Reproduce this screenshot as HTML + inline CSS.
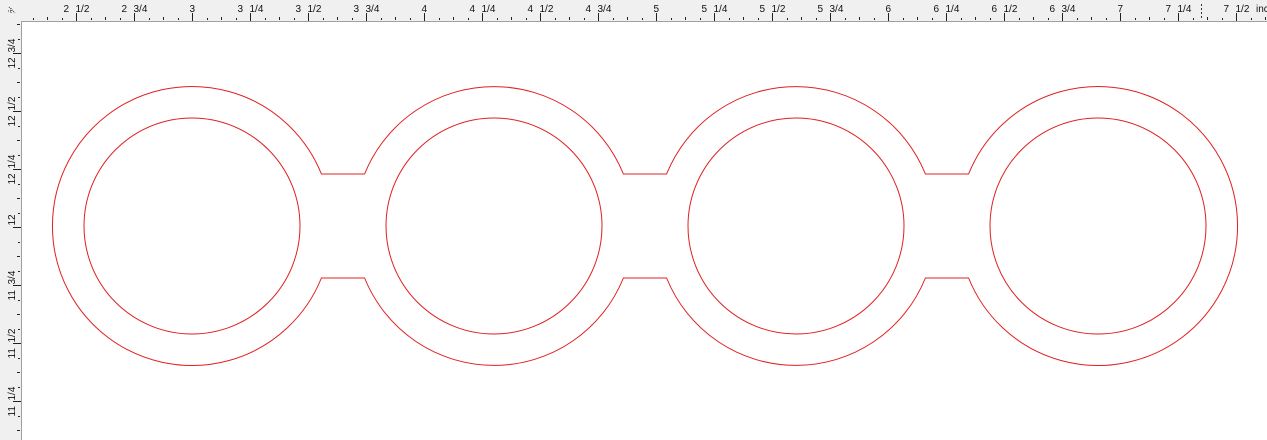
<!DOCTYPE html>
<html><head><meta charset="utf-8"><style>
html,body{margin:0;padding:0;width:1267px;height:440px;overflow:hidden;background:#fff}
svg{display:block;font-family:"Liberation Sans",sans-serif;font-size:10px}
</style></head><body>
<svg id="s" width="1267" height="440" xmlns="http://www.w3.org/2000/svg">
<rect x="0" y="0" width="1267" height="21" fill="#f0f0f0"/>
<rect x="0" y="0" width="21" height="440" fill="#f0f0f0"/>
<line x1="21" y1="21.5" x2="1267" y2="21.5" stroke="#a0a0a0"/>
<line x1="21.5" y1="21" x2="21.5" y2="440" stroke="#a0a0a0"/>
<g id="t"></g>
<g stroke="#333" stroke-dasharray="1,1"><line x1="9" y1="7" x2="15" y2="13"/><line x1="8" y1="11" x2="12" y2="11"/><line x1="11" y1="8" x2="11" y2="14"/></g>
<line x1="1201.5" y1="4" x2="1201.5" y2="20" stroke="#333" stroke-dasharray="2,2"/>
<path fill="none" stroke="#e02020" stroke-width="1" d="M321.4 174 L364.6 174 A139.5 139.5 0 0 1 623.4 174 L666.6 174 A139.5 139.5 0 0 1 925.4 174 L968.6 174 A139.5 139.5 0 1 1 968.6 278 L925.4 278 A139.5 139.5 0 0 1 666.6 278 L623.4 278 A139.5 139.5 0 0 1 364.6 278 L321.4 278 A139.5 139.5 0 1 1 321.4 174 Z"/>
<circle cx="192" cy="226" r="108" fill="none" stroke="#e02020"/>
<circle cx="494" cy="226" r="108" fill="none" stroke="#e02020"/>
<circle cx="796" cy="226" r="108" fill="none" stroke="#e02020"/>
<circle cx="1098" cy="226" r="108" fill="none" stroke="#e02020"/>
</svg>
<script>
var g=document.getElementById('t'),h='';
var fr=['','1/4','1/2','3/4'];
for(var i=-20;i<=90;i++){var v=3+i/16;var x=192+(v-3)*232;if(x<22||x>1267)continue;x=Math.round(x)+0.5;
 if(i%4==0){h+='<line x1="'+x+'" y1="13" x2="'+x+'" y2="21" stroke="#222"/>';
  var w=Math.floor(v+1e-9),q=Math.round((v-w)*4);
  if(q==0)h+='<text x="'+(x-3)+'" y="12" fill="#111">'+w+'</text>';
  else h+='<text x="'+(x-13)+'" y="12" fill="#111">'+w+'</text><text x="'+(x-1)+'" y="12" fill="#111">'+fr[q]+'</text>';}
 else h+='<rect x="'+(x-0.5)+'" y="'+(i%2?18:17)+'" width="1" height="'+(i%2?2:3)+'" fill="#222"/>';}
h+='<text x="1256" y="12" fill="#111">inc</text>';
for(var i=-30;i<=30;i++){var v=12-i/16;var y=227+i*14.5;if(y<22||y>440)continue;y=Math.round(y)+0.5;
 if(i%4==0){h+='<line x1="13" y1="'+y+'" x2="21" y2="'+y+'" stroke="#222"/>';
  var w=Math.floor(v+1e-9),q=Math.round((v-w)*4);
  if(q==0)h+='<text transform="translate(15,'+(y-2)+') rotate(-90)" fill="#111">'+w+'</text>';
  else h+='<text transform="translate(15,'+(y+15)+') rotate(-90)" fill="#111">'+w+'</text><text transform="translate(15,'+(y-1)+') rotate(-90)" fill="#111">'+fr[q]+'</text>';}
 else h+='<rect x="'+(i%2?18:17)+'" y="'+(y-0.5)+'" width="'+(i%2?2:3)+'" height="1" fill="#222"/>';}
g.innerHTML=h;
</script>
</body></html>
